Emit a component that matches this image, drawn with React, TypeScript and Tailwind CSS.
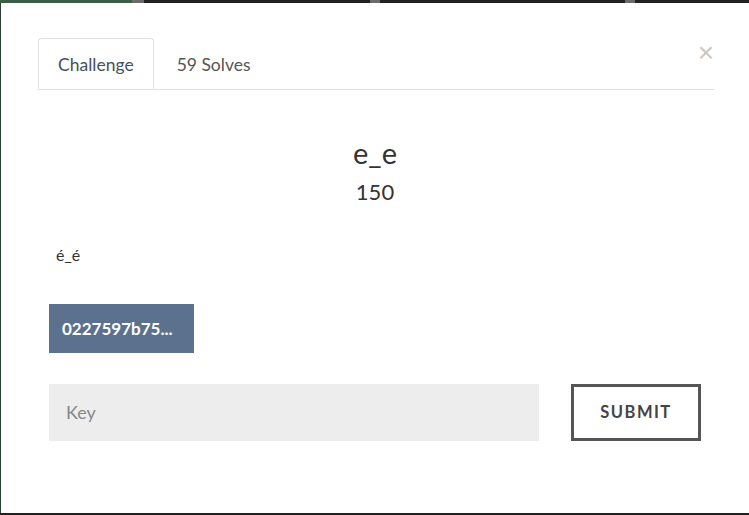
import React from "react";

export default function App() {
  return (
    <div className="w-[749px] h-[515px] bg-[#222] relative overflow-hidden" style={{ fontFamily: "Lato, 'Open Sans', sans-serif" }}>
      <div className="flex h-[3px]">
        <div className="w-[132px] bg-[#3d5e45]" />
        <div className="w-[12px] bg-[#6b6b6b]" />
        <div className="w-[226px] bg-[#222]" />
        <div className="w-[10px] bg-[#6b6b6b]" />
        <div className="w-[245px] bg-[#222]" />
        <div className="w-[10px] bg-[#6b6b6b]" />
        <div className="flex-1 bg-[#222]" />
      </div>
      <div className="flex h-[510px]">
        <div className="w-[1px] bg-[#2c3f30]" />
        <div className="flex-1 bg-white pt-[35px] px-[37px] relative">
          <button className="absolute right-[35px] top-[36px] text-[28px] leading-none text-[#c8c8c8]" style={{ fontFamily: "'Liberation Sans', sans-serif" }}>×</button>
          <div className="flex border-b border-[#dee2e6] mr-[-2px]">
            <div className="h-[51px] px-[19px] pt-[3px] flex items-center border border-[#dee2e6] border-b-white rounded-t-[4px] mb-[-1px] text-[17.5px] text-[#495057] bg-white">Challenge</div>
            <div className="h-[51px] px-[23px] pt-[3px] flex items-center text-[17.5px] text-[#555]">59 Solves</div>
          </div>
          <div className="px-[11px]">
            <div className="text-center mt-[45px] text-[29px] leading-[36px] text-[#333]">e_e</div>
            <div className="text-center mt-[8px] text-[22px] leading-[26px] text-[#333]">150</div>
            <div className="mt-[39px] ml-[7px] text-[16px] leading-[22px] text-[#333]">é_é</div>
            <div className="mt-[38px] w-[145px] h-[49px] bg-[#5b718e] text-white font-bold text-[17px] flex items-center pl-[13px]">0227597b75...</div>
            <div className="mt-[31px] flex items-center">
              <div className="w-[490px] h-[57px] bg-[#ededed] flex items-center pl-[17px] text-[18px] text-[#888]">Key</div>
              <div className="ml-[32px] w-[130px] h-[57px] border-[3px] border-[#555] flex items-center justify-center text-[#444] font-bold text-[16.5px] tracking-[1.5px]">SUBMIT</div>
            </div>
          </div>
        </div>
      </div>
      <div className="h-[2px] bg-[#222]" />
    </div>
  );
}
